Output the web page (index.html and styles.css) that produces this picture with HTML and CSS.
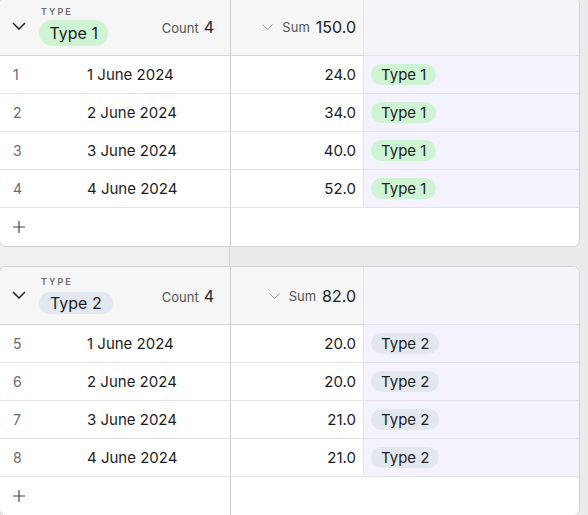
FILE: index.html
```html
<!DOCTYPE html>
<html>
<head>
<meta charset="utf-8">
<link rel="stylesheet" href="styles.css">
</head>
<body>
<div class="page">
  <section class="card">
    <div class="row head">
      <div class="c1">
        <svg class="chev" width="14" height="8" viewBox="0 0 14 8"><path d="M1 1l6 6 6-6" fill="none" stroke="#222" stroke-width="1.5"/></svg>
        <div class="grp">
          <span class="lbl">TYPE</span>
          <span class="hpill green">Type 1</span>
        </div>
        <div class="count"><span class="k">Count</span><span class="v">4</span></div>
      </div>
      <div class="c2 sumh">
        <svg class="chev2" width="11" height="6" viewBox="0 0 11 6"><path d="M0.5 0.5l5 5 5-5" fill="none" stroke="#9a9a9a" stroke-width="1"/></svg>
        <span class="k">Sum</span><span class="v">150.0</span>
      </div>
      <div class="c3"></div>
    </div>
    <div class="row"><div class="c1"><span class="num">1</span><span class="date">1 June 2024</span></div><div class="c2">24.0</div><div class="c3"><span class="pill green">Type 1</span></div></div>
    <div class="row"><div class="c1"><span class="num">2</span><span class="date">2 June 2024</span></div><div class="c2">34.0</div><div class="c3"><span class="pill green">Type 1</span></div></div>
    <div class="row"><div class="c1"><span class="num">3</span><span class="date">3 June 2024</span></div><div class="c2">40.0</div><div class="c3"><span class="pill green">Type 1</span></div></div>
    <div class="row"><div class="c1"><span class="num">4</span><span class="date">4 June 2024</span></div><div class="c2">52.0</div><div class="c3"><span class="pill green">Type 1</span></div></div>
    <div class="row add">
      <div class="c1"><svg width="14" height="14" viewBox="0 0 14 14"><path d="M7 1v12M1 7h12" stroke="#444" stroke-width="1.2"/></svg></div>
      <div class="rest"></div>
    </div>
  </section>

  <div class="gap"><div class="gapl"></div></div>

  <section class="card">
    <div class="row head">
      <div class="c1">
        <svg class="chev" width="14" height="8" viewBox="0 0 14 8"><path d="M1 1l6 6 6-6" fill="none" stroke="#222" stroke-width="1.5"/></svg>
        <div class="grp">
          <span class="lbl">TYPE</span>
          <span class="hpill blue small">Type 2</span>
        </div>
        <div class="count"><span class="k">Count</span><span class="v">4</span></div>
      </div>
      <div class="c2 sumh">
        <svg class="chev2" width="11" height="6" viewBox="0 0 11 6"><path d="M0.5 0.5l5 5 5-5" fill="none" stroke="#9a9a9a" stroke-width="1"/></svg>
        <span class="k">Sum</span><span class="v">82.0</span>
      </div>
      <div class="c3"></div>
    </div>
    <div class="row"><div class="c1"><span class="num">5</span><span class="date">1 June 2024</span></div><div class="c2">20.0</div><div class="c3"><span class="pill blue">Type 2</span></div></div>
    <div class="row"><div class="c1"><span class="num">6</span><span class="date">2 June 2024</span></div><div class="c2">20.0</div><div class="c3"><span class="pill blue">Type 2</span></div></div>
    <div class="row"><div class="c1"><span class="num">7</span><span class="date">3 June 2024</span></div><div class="c2">21.0</div><div class="c3"><span class="pill blue">Type 2</span></div></div>
    <div class="row"><div class="c1"><span class="num">8</span><span class="date">4 June 2024</span></div><div class="c2">21.0</div><div class="c3"><span class="pill blue">Type 2</span></div></div>
    <div class="row add">
      <div class="c1"><svg width="14" height="14" viewBox="0 0 14 14"><path d="M7 1v12M1 7h12" stroke="#444" stroke-width="1.2"/></svg></div>
      <div class="rest"></div>
    </div>
  </section>
</div>
</body>
</html>
```

FILE: styles.css
```css
html, body {
  margin: 0;
  padding: 0;
  background: #ebebeb;
  overflow: hidden;
  height: 515px;
}
body {
  font-family: Inter, "Noto Sans", sans-serif;
  color: #1d1d1f;
}
.page {
  margin-top: -3px;
  margin-left: -1px;
  width: 581px;
}
.card {
  background: #fff;
  border: 1px solid #d2d2d2;
  border-radius: 7px;
  overflow: hidden;
}
.row {
  display: flex;
  height: 38px;
  box-sizing: border-box;
}
.row > div {
  border-bottom: 1px solid #e3e3e3;
  box-sizing: border-box;
}
.c1 {
  width: 231px;
  flex: none;
  border-right: 1px solid #cfcfcf;
  display: flex;
  align-items: center;
  font-size: 15px;
}
.c2 {
  width: 133px;
  flex: none;
  border-right: 1px solid #e6e4ec;
  display: flex;
  align-items: center;
  justify-content: flex-end;
  padding-right: 7px;
  font-size: 15px;
}
.c3 {
  flex: 1;
  background: #f4f2fc;
  display: flex;
  align-items: center;
  padding-left: 7px;
}
.row > .c3 { border-bottom-color: #e2e0e8; }
.num {
  width: 14px;
  margin-left: 13px;
  color: #6b6b6b;
  font-size: 14px;
}
.date {
  margin-left: 60px;
}
.pill {
  display: inline-flex;
  align-items: center;
  height: 21px;
  padding: 0 10px;
  border-radius: 11px;
  font-size: 15px;
}
.green { background: #cff4d3; }
.blue { background: #e3e8f0; }

.head { height: 58px; }
.head > div { border-bottom-color: #d6d6d6; }
.head .c1, .head .c2 { background: #f6f6f6; }
.head .c3 { background: #f5f4f8; }
.chev { margin-left: 12px; margin-top: -1px; flex: none; }
.grp {
  display: flex;
  flex-direction: column;
  align-items: flex-start;
  margin-left: 13px;
  margin-top: -2px;
}
.lbl {
  font-size: 9px;
  line-height: 11px;
  font-weight: 600;
  letter-spacing: 2px;
  color: #6a6a6a;
  margin-left: 2px;
}
.hpill {
  display: inline-flex;
  align-items: center;
  height: 26px;
  margin-top: 3px;
  padding: 0 10.5px;
  border-radius: 13px;
  font-size: 16px;
}
.hpill.small { height: 22px; margin-top: 5px; padding: 0 11px; border-radius: 11px; }
.count {
  margin-left: auto;
  margin-right: 16px;
  display: flex;
  align-items: baseline;
  gap: 5px;
}
.k { font-size: 13px; color: #555; }
.v { font-size: 16px; color: #1d1d1f; }
.sumh { gap: 0; }
.chev2 { margin-right: 9px; margin-top: 1px; }
.sumh .k { margin-right: 6px; }
.sumh .v { font-size: 16px; }

.add { height: 38px; }
.add > div { border-bottom: none; }
.add .c1 { padding-left: 12px; }
.add .rest { flex: 1; }

.gap {
  height: 19px;
  display: flex;
}
.gapl {
  width: 231px;
  box-sizing: border-box;
  background: #f0f0f0;
  border-right: 1px solid #d0d0d0;
}
```
